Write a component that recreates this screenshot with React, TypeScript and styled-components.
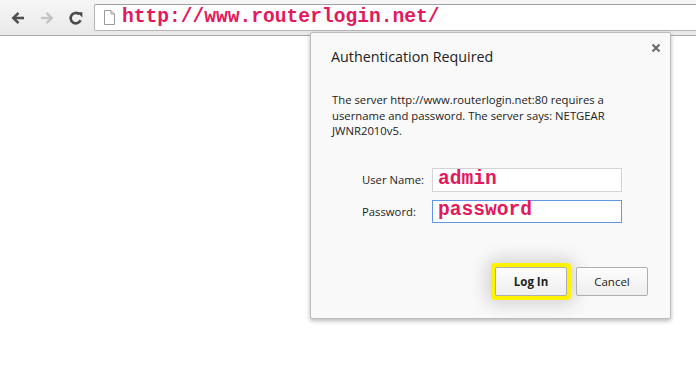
import React from "react";
import styled, { createGlobalStyle } from "styled-components";

const Global = createGlobalStyle`
  html, body { margin: 0; padding: 0; background: #ffffff; }
  body { width: 696px; height: 386px; overflow: hidden; position: relative; font-family: "Open Sans", "Noto Sans", sans-serif; }
  * { box-sizing: border-box; }
`;

const Page = styled.div`
  position: relative;
  width: 696px;
  height: 386px;
  background: #fff;
`;

const Toolbar = styled.div`
  display: flex;
  align-items: center;
  height: 36px;
  padding: 4px 0 4px 4px;
  background: linear-gradient(#f6f6f6, #e9e9e9);
  border-bottom: 1px solid #a9a9a9;
  overflow: hidden;
`;

const NavButton = styled.div`
  width: 28px;
  height: 26px;
  display: flex;
  align-items: center;
  justify-content: center;
  margin-right: 1px;
`;

const AddressBar = styled.div`
  flex: 1;
  height: 27px;
  margin-left: 3px;
  margin-right: -4px;
  display: flex;
  align-items: center;
  background: #fff;
  border: 1px solid #b4b4b4;
  border-top-color: #a0a0a0;
  border-radius: 2px;
  padding-left: 9px;
`;

const Url = styled.span`
  font-family: "Liberation Mono", "Courier New", monospace;
  font-weight: bold;
  font-size: 19.6px;
  color: #e2195b;
  margin-left: 7px;
  line-height: 1;
`;

const Dialog = styled.div`
  position: absolute;
  left: 310px;
  top: 32px;
  width: 361px;
  height: 287px;
  background: #f9f9f9;
  border: 1px solid #bcbcbc;
  border-radius: 2px;
  box-shadow: 0 2px 4px rgba(0, 0, 0, 0.28);
  padding: 13px 22px 0 20px;
  display: flex;
  flex-direction: column;
`;

const Close = styled.div`
  position: absolute;
  right: 8px;
  top: 9px;
  width: 12px;
  height: 12px;
  display: flex;
  align-items: center;
  justify-content: center;
`;

const Title = styled.div`
  font-size: 14.3px;
  color: #222;
  line-height: 22px;
`;

const Message = styled.div`
  margin-top: 24px;
  font-size: 11.3px;
  line-height: 15.6px;
  color: #222;
  padding-left: 1px;
  width: 290px;
`;

const Form = styled.div`
  margin-top: 29px;
  margin-left: 31px;
  display: grid;
  grid-template-columns: 70px 190px;
  row-gap: 8px;
  align-items: center;
`;

const Label = styled.div`
  font-size: 11.3px;
  color: #1e1e1e;
`;

const Field = styled.div<{ $focused?: boolean }>`
  height: ${(p) => (p.$focused ? 23 : 24)}px;
  background: #fff;
  border: 1px solid ${(p) => (p.$focused ? "#5f96e6" : "#d3d3d3")};
  display: flex;
  align-items: center;
  padding-left: 5px;
  font-family: "Liberation Mono", "Courier New", monospace;
  font-weight: bold;
  font-size: 19.6px;
  color: #e2195b;
  line-height: 1;
`;

const Buttons = styled.div`
  margin-top: auto;
  margin-bottom: 18px;
  display: flex;
  justify-content: flex-end;
  align-items: center;
  gap: 5px;
`;

const Highlight = styled.div`
  padding: 4px;
  border-radius: 4px;
  background: #fff200;
  box-shadow: 0 0 18px 4px rgba(0, 0, 0, 0.16);
`;

const Button = styled.button<{ $primary?: boolean }>`
  width: 72px;
  height: 29px;
  border: 1px solid #aeaeae;
  border-radius: 2px;
  background: linear-gradient(#fdfdfd, #eeeeee);
  font-family: "Open Sans", "Noto Sans", sans-serif;
  font-size: 11.5px;
  font-weight: ${(p) => (p.$primary ? 700 : 400)};
  color: #222;
  padding: 0;
  margin: 0;
`;

const CancelWrap = styled.div`
  padding: 4px 0;
`;

function BackIcon({ color }: { color: string }) {
  return (
    <svg width="16" height="16" viewBox="0 0 16 16">
      <path d="M14 8H4" stroke={color} strokeWidth="2.6" fill="none" />
      <path d="M8.5 2.8L3.3 8l5.2 5.2" stroke={color} strokeWidth="2.6" fill="none" />
    </svg>
  );
}

function ForwardIcon({ color }: { color: string }) {
  return (
    <svg width="16" height="16" viewBox="0 0 16 16">
      <path d="M2 8h10" stroke={color} strokeWidth="2.4" fill="none" />
      <path d="M7.5 2.8L12.7 8l-5.2 5.2" stroke={color} strokeWidth="2.4" fill="none" />
    </svg>
  );
}

function ReloadIcon() {
  return (
    <svg width="16" height="16" viewBox="0 0 16 16">
      <path d="M12.6 10.3A5.2 5.2 0 1 1 11.4 4.3" stroke="#4a4a4a" strokeWidth="2.6" fill="none" />
      <path d="M9 2.2h5.4v5.4z" fill="#4a4a4a" />
    </svg>
  );
}

function FileIcon() {
  return (
    <svg width="11" height="15" viewBox="0 0 11 15">
      <path d="M0.5 0.5h6.5l3.5 3.5v10.5h-10z" fill="#fff" stroke="#9a9a9a" />
      <path d="M7 0.5v3.5h3.5" fill="none" stroke="#9a9a9a" />
    </svg>
  );
}

function CloseIcon() {
  return (
    <svg width="10" height="10" viewBox="0 0 10 10">
      <path d="M1.5 1.5l7 7M8.5 1.5l-7 7" stroke="#666" strokeWidth="2" />
    </svg>
  );
}

export default function App() {
  return (
    <Page>
      <Global />
      <Toolbar>
        <NavButton>
          <BackIcon color="#505050" />
        </NavButton>
        <NavButton>
          <ForwardIcon color="#c4c4c4" />
        </NavButton>
        <NavButton>
          <ReloadIcon />
        </NavButton>
        <AddressBar>
          <FileIcon />
          <Url>http://www.routerlogin.net/</Url>
        </AddressBar>
      </Toolbar>
      <Dialog>
        <Close>
          <CloseIcon />
        </Close>
        <Title>Authentication Required</Title>
        <Message>
          The server http://www.routerlogin.net:80 requires a username and password. The server
          says: NETGEAR JWNR2010v5.
        </Message>
        <Form>
          <Label>User Name:</Label>
          <Field>admin</Field>
          <Label>Password:</Label>
          <Field $focused>password</Field>
        </Form>
        <Buttons>
          <Highlight>
            <Button $primary>Log In</Button>
          </Highlight>
          <CancelWrap>
            <Button>Cancel</Button>
          </CancelWrap>
        </Buttons>
      </Dialog>
    </Page>
  );
}
